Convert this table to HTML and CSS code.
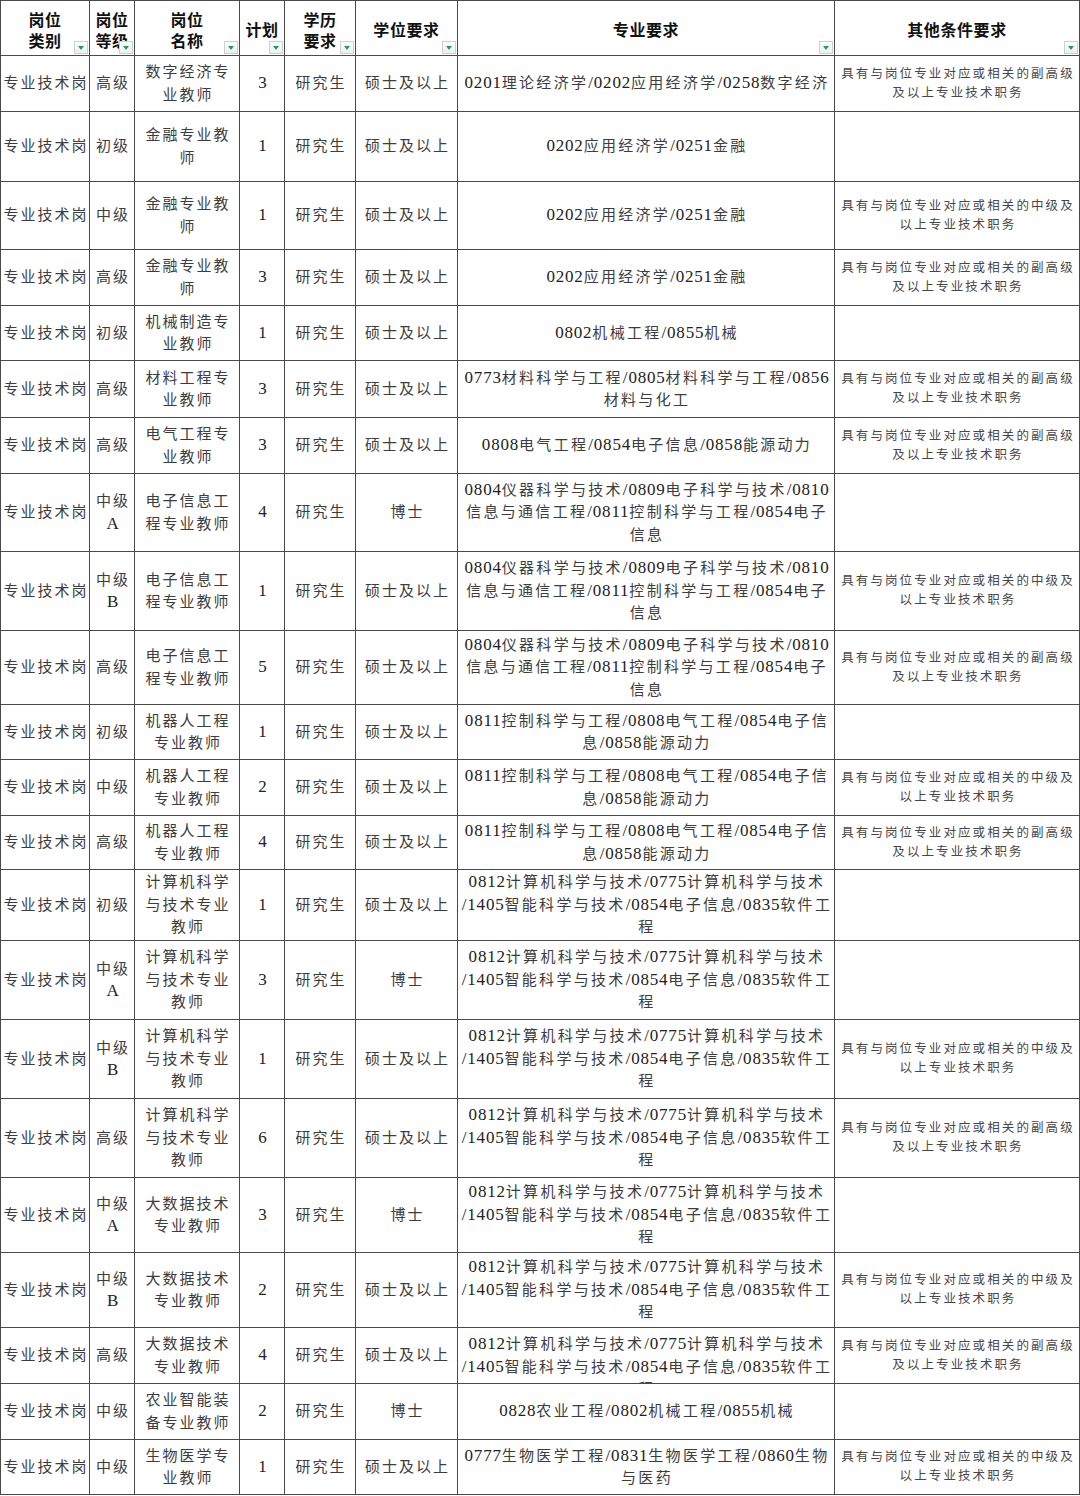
FILE: index.html
```html
<!DOCTYPE html>
<html lang="zh-CN">
<head>
<meta charset="utf-8">
<title>岗位需求表</title>
<link rel="stylesheet" href="styles.css">
</head>
<body>
<div class="sheet">
  <div class="th">岗位<br>类别<span class="filter"></span></div>
  <div class="th">岗位<br>等级<span class="filter"></span></div>
  <div class="th">岗位<br>名称<span class="filter"></span></div>
  <div class="th">计划<span class="filter"></span></div>
  <div class="th">学历<br>要求<span class="filter"></span></div>
  <div class="th">学位要求<span class="filter"></span></div>
  <div class="th">专业要求<span class="filter"></span></div>
  <div class="th">其他条件要求<span class="filter"></span></div>

  <div class="td">专业技术岗</div><div class="td">高级</div><div class="td">数字经济专<br>业教师</div><div class="td n">3</div><div class="td">研究生</div><div class="td">硕士及以上</div><div class="td spec"><p><span class="n">0201</span>理论经济学<span class="n">/0202</span>应用经济学<span class="n">/0258</span>数字经济</p></div><div class="td other">具有与岗位专业对应或相关的副高级<br>及以上专业技术职务</div>

  <div class="td">专业技术岗</div><div class="td">初级</div><div class="td">金融专业教<br>师</div><div class="td n">1</div><div class="td">研究生</div><div class="td">硕士及以上</div><div class="td spec"><p><span class="n">0202</span>应用经济学<span class="n">/0251</span>金融</p></div><div class="td other"></div>

  <div class="td">专业技术岗</div><div class="td">中级</div><div class="td">金融专业教<br>师</div><div class="td n">1</div><div class="td">研究生</div><div class="td">硕士及以上</div><div class="td spec"><p><span class="n">0202</span>应用经济学<span class="n">/0251</span>金融</p></div><div class="td other">具有与岗位专业对应或相关的中级及<br>以上专业技术职务</div>

  <div class="td">专业技术岗</div><div class="td">高级</div><div class="td">金融专业教<br>师</div><div class="td n">3</div><div class="td">研究生</div><div class="td">硕士及以上</div><div class="td spec"><p><span class="n">0202</span>应用经济学<span class="n">/0251</span>金融</p></div><div class="td other">具有与岗位专业对应或相关的副高级<br>及以上专业技术职务</div>

  <div class="td">专业技术岗</div><div class="td">初级</div><div class="td">机械制造专<br>业教师</div><div class="td n">1</div><div class="td">研究生</div><div class="td">硕士及以上</div><div class="td spec"><p><span class="n">0802</span>机械工程<span class="n">/0855</span>机械</p></div><div class="td other"></div>

  <div class="td">专业技术岗</div><div class="td">高级</div><div class="td">材料工程专<br>业教师</div><div class="td n">3</div><div class="td">研究生</div><div class="td">硕士及以上</div><div class="td spec"><p><span class="n">0773</span>材料科学与工程<span class="n">/0805</span>材料科学与工程<span class="n">/0856</span><br>材料与化工</p></div><div class="td other">具有与岗位专业对应或相关的副高级<br>及以上专业技术职务</div>

  <div class="td">专业技术岗</div><div class="td">高级</div><div class="td">电气工程专<br>业教师</div><div class="td n">3</div><div class="td">研究生</div><div class="td">硕士及以上</div><div class="td spec"><p><span class="n">0808</span>电气工程<span class="n">/0854</span>电子信息<span class="n">/0858</span>能源动力</p></div><div class="td other">具有与岗位专业对应或相关的副高级<br>及以上专业技术职务</div>

  <div class="td">专业技术岗</div><div class="td"><p>中级<br><span class="n">A</span></p></div><div class="td">电子信息工<br>程专业教师</div><div class="td n">4</div><div class="td">研究生</div><div class="td">博士</div><div class="td spec"><p><span class="n">0804</span>仪器科学与技术<span class="n">/0809</span>电子科学与技术<span class="n">/0810</span><br>信息与通信工程<span class="n">/0811</span>控制科学与工程<span class="n">/0854</span>电子<br>信息</p></div><div class="td other"></div>

  <div class="td">专业技术岗</div><div class="td"><p>中级<br><span class="n">B</span></p></div><div class="td">电子信息工<br>程专业教师</div><div class="td n">1</div><div class="td">研究生</div><div class="td">硕士及以上</div><div class="td spec"><p><span class="n">0804</span>仪器科学与技术<span class="n">/0809</span>电子科学与技术<span class="n">/0810</span><br>信息与通信工程<span class="n">/0811</span>控制科学与工程<span class="n">/0854</span>电子<br>信息</p></div><div class="td other">具有与岗位专业对应或相关的中级及<br>以上专业技术职务</div>

  <div class="td">专业技术岗</div><div class="td">高级</div><div class="td">电子信息工<br>程专业教师</div><div class="td n">5</div><div class="td">研究生</div><div class="td">硕士及以上</div><div class="td spec"><p><span class="n">0804</span>仪器科学与技术<span class="n">/0809</span>电子科学与技术<span class="n">/0810</span><br>信息与通信工程<span class="n">/0811</span>控制科学与工程<span class="n">/0854</span>电子<br>信息</p></div><div class="td other">具有与岗位专业对应或相关的副高级<br>及以上专业技术职务</div>

  <div class="td">专业技术岗</div><div class="td">初级</div><div class="td">机器人工程<br>专业教师</div><div class="td n">1</div><div class="td">研究生</div><div class="td">硕士及以上</div><div class="td spec"><p><span class="n">0811</span>控制科学与工程<span class="n">/0808</span>电气工程<span class="n">/0854</span>电子信<br>息<span class="n">/0858</span>能源动力</p></div><div class="td other"></div>

  <div class="td">专业技术岗</div><div class="td">中级</div><div class="td">机器人工程<br>专业教师</div><div class="td n">2</div><div class="td">研究生</div><div class="td">硕士及以上</div><div class="td spec"><p><span class="n">0811</span>控制科学与工程<span class="n">/0808</span>电气工程<span class="n">/0854</span>电子信<br>息<span class="n">/0858</span>能源动力</p></div><div class="td other">具有与岗位专业对应或相关的中级及<br>以上专业技术职务</div>

  <div class="td">专业技术岗</div><div class="td">高级</div><div class="td">机器人工程<br>专业教师</div><div class="td n">4</div><div class="td">研究生</div><div class="td">硕士及以上</div><div class="td spec"><p><span class="n">0811</span>控制科学与工程<span class="n">/0808</span>电气工程<span class="n">/0854</span>电子信<br>息<span class="n">/0858</span>能源动力</p></div><div class="td other">具有与岗位专业对应或相关的副高级<br>及以上专业技术职务</div>

  <div class="td">专业技术岗</div><div class="td">初级</div><div class="td">计算机科学<br>与技术专业<br>教师</div><div class="td n">1</div><div class="td">研究生</div><div class="td">硕士及以上</div><div class="td spec"><p><span class="n">0812</span>计算机科学与技术<span class="n">/0775</span>计算机科学与技术<br><span class="n">/1405</span>智能科学与技术<span class="n">/0854</span>电子信息<span class="n">/0835</span>软件工<br>程</p></div><div class="td other"></div>

  <div class="td">专业技术岗</div><div class="td"><p>中级<br><span class="n">A</span></p></div><div class="td">计算机科学<br>与技术专业<br>教师</div><div class="td n">3</div><div class="td">研究生</div><div class="td">博士</div><div class="td spec"><p><span class="n">0812</span>计算机科学与技术<span class="n">/0775</span>计算机科学与技术<br><span class="n">/1405</span>智能科学与技术<span class="n">/0854</span>电子信息<span class="n">/0835</span>软件工<br>程</p></div><div class="td other"></div>

  <div class="td">专业技术岗</div><div class="td"><p>中级<br><span class="n">B</span></p></div><div class="td">计算机科学<br>与技术专业<br>教师</div><div class="td n">1</div><div class="td">研究生</div><div class="td">硕士及以上</div><div class="td spec"><p><span class="n">0812</span>计算机科学与技术<span class="n">/0775</span>计算机科学与技术<br><span class="n">/1405</span>智能科学与技术<span class="n">/0854</span>电子信息<span class="n">/0835</span>软件工<br>程</p></div><div class="td other">具有与岗位专业对应或相关的中级及<br>以上专业技术职务</div>

  <div class="td">专业技术岗</div><div class="td">高级</div><div class="td">计算机科学<br>与技术专业<br>教师</div><div class="td n">6</div><div class="td">研究生</div><div class="td">硕士及以上</div><div class="td spec"><p><span class="n">0812</span>计算机科学与技术<span class="n">/0775</span>计算机科学与技术<br><span class="n">/1405</span>智能科学与技术<span class="n">/0854</span>电子信息<span class="n">/0835</span>软件工<br>程</p></div><div class="td other">具有与岗位专业对应或相关的副高级<br>及以上专业技术职务</div>

  <div class="td">专业技术岗</div><div class="td"><p>中级<br><span class="n">A</span></p></div><div class="td">大数据技术<br>专业教师</div><div class="td n">3</div><div class="td">研究生</div><div class="td">博士</div><div class="td spec"><p><span class="n">0812</span>计算机科学与技术<span class="n">/0775</span>计算机科学与技术<br><span class="n">/1405</span>智能科学与技术<span class="n">/0854</span>电子信息<span class="n">/0835</span>软件工<br>程</p></div><div class="td other"></div>

  <div class="td">专业技术岗</div><div class="td"><p>中级<br><span class="n">B</span></p></div><div class="td">大数据技术<br>专业教师</div><div class="td n">2</div><div class="td">研究生</div><div class="td">硕士及以上</div><div class="td spec"><p><span class="n">0812</span>计算机科学与技术<span class="n">/0775</span>计算机科学与技术<br><span class="n">/1405</span>智能科学与技术<span class="n">/0854</span>电子信息<span class="n">/0835</span>软件工<br>程</p></div><div class="td other">具有与岗位专业对应或相关的中级及<br>以上专业技术职务</div>

  <div class="td">专业技术岗</div><div class="td">高级</div><div class="td">大数据技术<br>专业教师</div><div class="td n">4</div><div class="td">研究生</div><div class="td">硕士及以上</div><div class="td spec clip"><p><span class="n">0812</span>计算机科学与技术<span class="n">/0775</span>计算机科学与技术<br><span class="n">/1405</span>智能科学与技术<span class="n">/0854</span>电子信息<span class="n">/0835</span>软件工<br>程</p></div><div class="td other">具有与岗位专业对应或相关的副高级<br>及以上专业技术职务</div>

  <div class="td">专业技术岗</div><div class="td">中级</div><div class="td">农业智能装<br>备专业教师</div><div class="td n">2</div><div class="td">研究生</div><div class="td">博士</div><div class="td spec"><p><span class="n">0828</span>农业工程<span class="n">/0802</span>机械工程<span class="n">/0855</span>机械</p></div><div class="td other"></div>

  <div class="td">专业技术岗</div><div class="td">中级</div><div class="td">生物医学专<br>业教师</div><div class="td n">1</div><div class="td">研究生</div><div class="td">硕士及以上</div><div class="td spec"><p><span class="n">0777</span>生物医学工程<span class="n">/0831</span>生物医学工程<span class="n">/0860</span>生物<br>与医药</p></div><div class="td other">具有与岗位专业对应或相关的中级及<br>以上专业技术职务</div>
</div>
</body>
</html>
```

FILE: styles.css
```css
html, body {
  margin: 0;
  padding: 0;
  background: #ffffff;
}

.sheet {
  box-sizing: border-box;
  width: 1080px;
  display: grid;
  grid-template-columns: 88px 44px 104px 44px 70px 101px 376px 244px;
  grid-template-rows: 54px 55px 69px 67px 55px 54px 56px 55px 77px 78px 73px 54px 55px 53px 70px 78px 78px 78px 74px 74px 55px 55px 54px;
  gap: 1px;
  background: #4a4a4a;
  border: 1px solid #4a4a4a;
  font-family: "Liberation Serif", "Noto Sans CJK SC", serif;
}

.th,
.td {
  box-sizing: border-box;
  background: #ffffff;
  display: flex;
  align-items: center;
  justify-content: center;
  text-align: center;
  overflow: hidden;
  white-space: nowrap;
}

.td p {
  margin: 0;
}

.th {
  position: relative;
  padding-top: 5px;
  font-size: 16px;
  line-height: 21px;
  letter-spacing: 0.6px;
  font-weight: 700;
  color: #111111;
}

.td {
  padding-left: 2px;
  font-size: 15px;
  line-height: 22.5px;
  letter-spacing: 2px;
  color: #3d3d3d;
}

.td.spec {
  letter-spacing: 2.3px;
}

.n {
  font-size: 17px;
  letter-spacing: 0.8px;
  color: #222222;
}

.td.other {
  font-size: 12.5px;
  line-height: 19px;
  letter-spacing: 2.1px;
  color: #474747;
}

.td.clip {
  align-items: flex-start;
  padding-top: 5px;
}

.filter {
  position: absolute;
  right: 1px;
  bottom: 1px;
  width: 14px;
  height: 13px;
  box-sizing: border-box;
  border: 1px solid #cfcfcf;
  background: linear-gradient(#ffffff, #eeeeee);
}

.filter::after {
  content: "";
  position: absolute;
  left: 3px;
  top: 4px;
  width: 0;
  height: 0;
  border-left: 3.5px solid transparent;
  border-right: 3.5px solid transparent;
  border-top: 4px solid #1f9b68;
}
```
